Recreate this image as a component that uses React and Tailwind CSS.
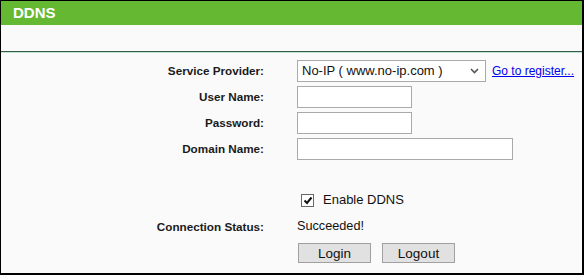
function Row({ label, className = '', children }) {
  return (
    <div className={`flex items-center ${className}`}>
      <div className="w-[263px] shrink-0 text-right text-[11.7px] font-bold text-[#1a1a1a]">{label}</div>
      <div className="ml-[33px] flex items-center">{children}</div>
    </div>
  )
}

function TextBox({ width }) {
  return <div className={`h-[22px] ${width} border border-[#a9a9a9] bg-white`} />
}

export default function App() {
  return (
    <div
      className="h-[275px] w-[584px] overflow-hidden border-t border-l border-r-2 border-b-2 border-black bg-[#fafafa] text-[#111]"
      style={{ fontFamily: '"Liberation Sans", Arial, sans-serif' }}
    >
      <div className="flex h-[24px] items-center bg-[#65b832] pl-[12px] text-[15px] font-bold text-white">DDNS</div>
      <div className="h-[26px]" />
      <div className="h-px bg-[#2d5f4c]" />
      <div className="h-px bg-[#c6e0cf]" />

      <Row label="Service Provider:" className="mt-[7px] h-[22px]">
        <div className="flex h-[22px] w-[189px] items-center justify-between border border-[#a9a9a9] bg-white pl-[4px] pr-[6px] text-[13px]">
          <span>No-IP ( www.no-ip.com )</span>
          <svg width="9" height="6" viewBox="0 0 9 6">
            <path d="M1 1l3.5 3.5L8 1" fill="none" stroke="#555" strokeWidth="1.6" />
          </svg>
        </div>
        <a href="#" className="ml-[6px] text-[12px] text-[#0000ee] underline">Go to register...</a>
      </Row>
      <Row label="User Name:" className="mt-[4px] h-[22px]">
        <TextBox width="w-[115px]" />
      </Row>
      <Row label="Password:" className="mt-[4px] h-[22px]">
        <TextBox width="w-[115px]" />
      </Row>
      <Row label="Domain Name:" className="mt-[4px] h-[22px]">
        <TextBox width="w-[216px]" />
      </Row>

      <Row label="" className="mt-[33px] h-[14px]">
        <div className="ml-[4px] flex h-[13px] w-[13px] items-center justify-center border border-[#666] bg-white">
          <svg width="10" height="9" viewBox="0 0 10 9">
            <path d="M1.5 4.5l2.5 2.5L8.5 1.5" fill="none" stroke="#111" strokeWidth="2" />
          </svg>
        </div>
        <span className="ml-[9px] text-[13px]">Enable DDNS</span>
      </Row>
      <Row label="Connection Status:" className="mt-[13px] h-[14px]">
        <span className="text-[12.7px]">Succeeded!</span>
      </Row>
      <Row label="" className="mt-[9px] h-[20px]">
        <button className="ml-[1px] h-[20px] w-[73px] border border-[#a0a0a0] bg-[#e1e1e1] text-[13.5px]">Login</button>
        <button className="ml-[11px] h-[20px] w-[73px] border border-[#a0a0a0] bg-[#e1e1e1] text-[13.5px]">Logout</button>
      </Row>
    </div>
  )
}
